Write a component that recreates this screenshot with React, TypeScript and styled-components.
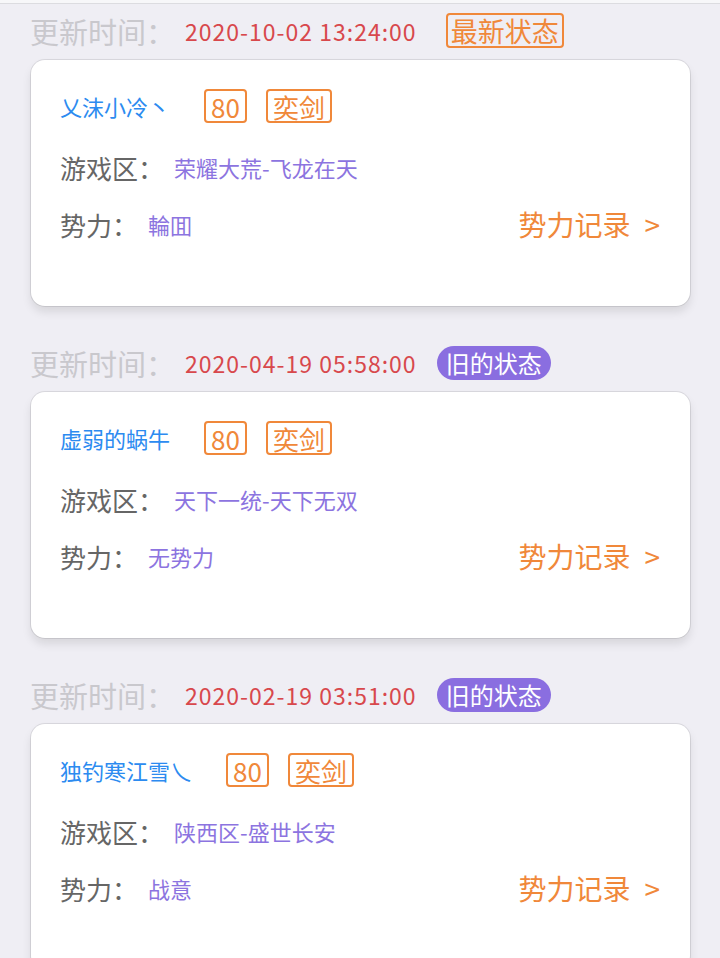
import React from "react";
import styled, { createGlobalStyle } from "styled-components";

const GlobalStyle = createGlobalStyle`
  body {
    margin: 0;
    background: #efeef4;
    font-family: "Noto Sans CJK SC", "Noto Sans", sans-serif;
  }
`;

const TopBar = styled.div`
  height: 3px;
  background: #f7f7f9;
  border-bottom: 1px solid #dcdce0;
`;

const List = styled.main`
  padding: 0 30px 0 30px;
`;

const Section = styled.section`
  & + & {
    margin-top: 30px;
  }
`;

const Header = styled.header`
  height: 53px;
  padding-bottom: 3px;
  display: flex;
  align-items: center;
`;

const UpdateLabel = styled.span`
  color: #c9c8cd;
  font-size: 29px;
  margin-right: 10px;
`;

const UpdateTime = styled.span`
  color: #d8484c;
  font-size: 23px;
  letter-spacing: 1px;
`;

const StatusBadge = styled.span<{ $latest?: boolean }>`
  box-sizing: border-box;
  height: ${(p) => (p.$latest ? "35px" : "34px")};
  display: inline-flex;
  align-items: center;
  margin-left: ${(p) => (p.$latest ? "29px" : "20px")};
  padding: ${(p) => (p.$latest ? "0 3px" : "0 9px")};
  font-size: ${(p) => (p.$latest ? "27px" : "24px")};
  color: ${(p) => (p.$latest ? "#f0883a" : "#ffffff")};
  background: ${(p) => (p.$latest ? "transparent" : "#8a6ee0")};
  border: ${(p) => (p.$latest ? "2px solid #f0883a" : "none")};
  border-radius: ${(p) => (p.$latest ? "4px" : "17px")};
`;

const Card = styled.div`
  box-sizing: border-box;
  height: 246px;
  margin-left: 1px;
  padding: 29px 30px 0 29px;
  background: #ffffff;
  border-radius: 14px;
  box-shadow: 0 0 0 1px rgba(0, 0, 0, 0.09), 0 6px 10px rgba(0, 0, 0, 0.1);
`;

const NameRow = styled.div`
  height: 34px;
  display: flex;
  align-items: center;
`;

const Name = styled.span`
  color: #2c8bf0;
  font-size: 22px;
  margin-right: 34px;
`;

const Tag = styled.span`
  box-sizing: border-box;
  height: 34px;
  display: inline-flex;
  align-items: center;
  padding: 0 5px;
  margin-right: 19px;
  color: #f0883a;
  font-size: 26px;
  border: 2px solid #f0883a;
  border-radius: 4px;
`;

const InfoRow = styled.div<{ $gap: number }>`
  height: 40px;
  margin-top: ${(p) => p.$gap}px;
  display: flex;
  align-items: center;
`;

const Label = styled.span`
  color: #666666;
  font-size: 26px;
`;

const Value = styled.span`
  color: #8c74e0;
  font-size: 22px;
  margin-left: 10px;
`;

const RecordLink = styled.a`
  margin-left: auto;
  color: #f0883a;
  font-size: 28px;
  text-decoration: none;
  cursor: pointer;
  display: flex;
  align-items: center;
  gap: 14px;
`;

interface IRecord {
  time: string;
  latest: boolean;
  name: string;
  level: number;
  school: string;
  server: string;
  force: string;
}

const records: IRecord[] = [
  {
    time: "2020-10-02 13:24:00",
    latest: true,
    name: "乂沫小冷丶",
    level: 80,
    school: "奕剑",
    server: "荣耀大荒-飞龙在天",
    force: "輪囬",
  },
  {
    time: "2020-04-19 05:58:00",
    latest: false,
    name: "虚弱的蜗牛",
    level: 80,
    school: "奕剑",
    server: "天下一统-天下无双",
    force: "无势力",
  },
  {
    time: "2020-02-19 03:51:00",
    latest: false,
    name: "独钓寒江雪乀",
    level: 80,
    school: "奕剑",
    server: "陕西区-盛世长安",
    force: "战意",
  },
];

const App = () => {
  return (
    <>
      <GlobalStyle />
      <TopBar />
      <List>
        {records.map((r) => (
          <Section key={r.time}>
            <Header>
              <UpdateLabel>更新时间：</UpdateLabel>
              <UpdateTime>{r.time}</UpdateTime>
              <StatusBadge $latest={r.latest}>
                {r.latest ? "最新状态" : "旧的状态"}
              </StatusBadge>
            </Header>
            <Card>
              <NameRow>
                <Name>{r.name}</Name>
                <Tag>{r.level}</Tag>
                <Tag>{r.school}</Tag>
              </NameRow>
              <InfoRow $gap={24}>
                <Label>游戏区：</Label>
                <Value>{r.server}</Value>
              </InfoRow>
              <InfoRow $gap={17}>
                <Label>势力：</Label>
                <Value>{r.force}</Value>
                <RecordLink>
                  势力记录 <span>&gt;</span>
                </RecordLink>
              </InfoRow>
            </Card>
          </Section>
        ))}
      </List>
    </>
  );
};

export default App;
